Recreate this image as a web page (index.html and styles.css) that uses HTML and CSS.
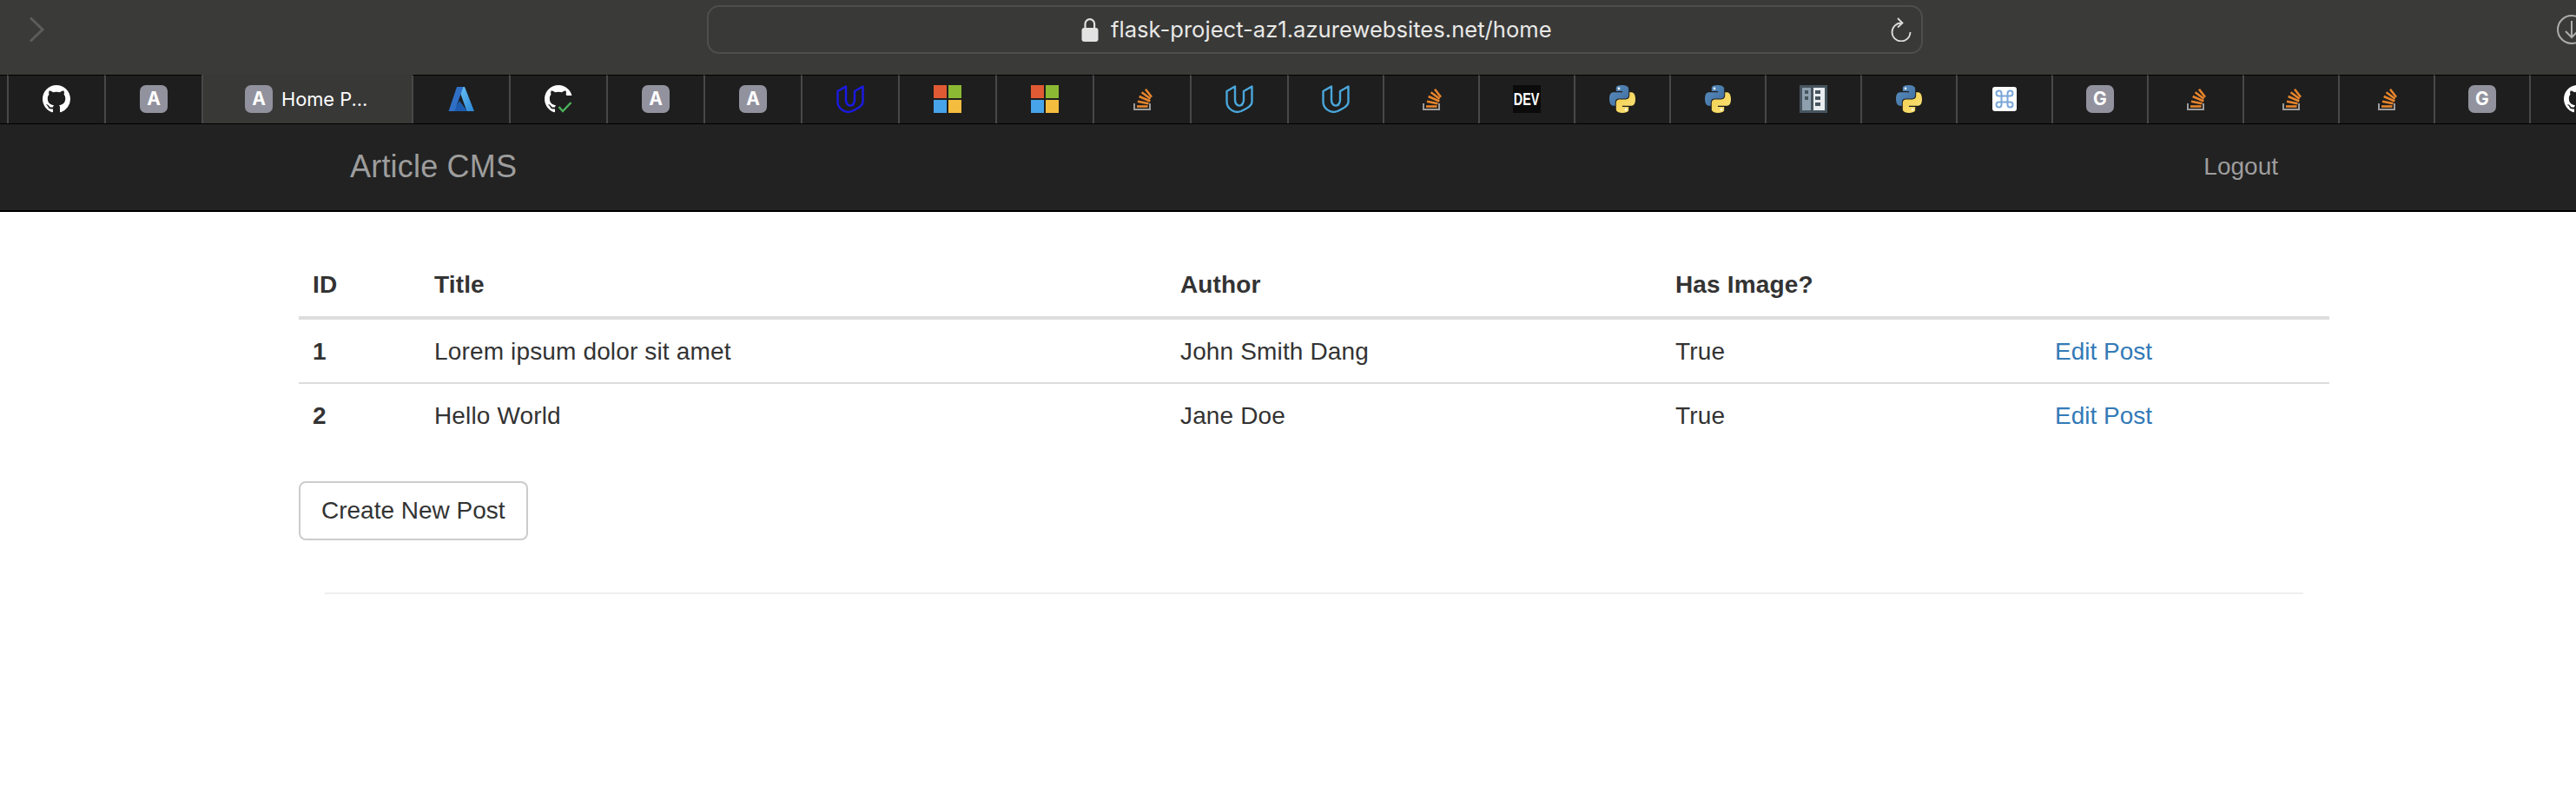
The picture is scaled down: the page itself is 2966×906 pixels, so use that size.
FILE: index.html
```html
<!DOCTYPE html>
<html lang="en">
<head>
<meta charset="utf-8">
<title>Home Page - Article CMS</title>
<link rel="stylesheet" href="styles.css">
</head>
<body>
<svg class="sprite" aria-hidden="true">
  <defs>
    <linearGradient id="pyblue" x1="0" y1="0" x2="1" y2="1"><stop offset="0" stop-color="#5a8fc0"/><stop offset="1" stop-color="#3f6c9e"/></linearGradient>
    <linearGradient id="pyyellow" x1="0" y1="0" x2="1" y2="1"><stop offset="0" stop-color="#fbe27a"/><stop offset="1" stop-color="#f2cf4c"/></linearGradient>
    <linearGradient id="azlight" x1="0" y1="0" x2="1" y2="1"><stop offset="0" stop-color="#6cc6f6"/><stop offset="1" stop-color="#2a86d6"/></linearGradient>
  </defs>
  <symbol id="gh" viewBox="0 0 16 16"><path fill="#fff" d="M8 0C3.58 0 0 3.58 0 8c0 3.54 2.29 6.53 5.47 7.59.4.07.55-.17.55-.38 0-.19-.01-.82-.01-1.49-2.01.37-2.53-.49-2.69-.94-.09-.23-.48-.94-.82-1.13-.28-.15-.68-.52-.01-.53.63-.01 1.08.58 1.23.82.72 1.21 1.87.87 2.33.66.07-.52.28-.87.51-1.07-1.78-.2-3.64-.89-3.64-3.95 0-.87.31-1.59.82-2.15-.08-.2-.36-1.02.08-2.12 0 0 .67-.21 2.2.82.64-.18 1.32-.27 2-.27.68 0 1.36.09 2 .27 1.53-1.04 2.2-.82 2.2-.82.44 1.1.16 1.92.08 2.12.51.56.82 1.27.82 2.15 0 3.07-1.87 3.75-3.65 3.95.29.25.54.73.54 1.48 0 1.07-.01 1.93-.01 2.2 0 .21.15.46.55.38A8.013 8.013 0 0016 8c0-4.42-3.58-8-8-8z"/></symbol>
  <symbol id="udacity" viewBox="0 0 32 32"><path fill="none" stroke="currentColor" stroke-width="2.400" stroke-linejoin="round" stroke-linecap="round" d="M1.500 19V7L11 1.500V17C11 22.500 15 25 19 22.800M21 17V7L30.500 1.500V19C30.500 23 28 25 23 27.500L18 30C10 33 1.500 27 1.500 19M21 17C21 20 19 22.500 17 23.500"/></symbol>
  <symbol id="ms" viewBox="0 0 32 32"><rect width="15" height="15" fill="#e05a33"/><rect x="17" width="15" height="15" fill="#8cb934"/><rect y="17" width="15" height="15" fill="#47a3ea"/><rect x="17" y="17" width="15" height="15" fill="#f5bd3f"/></symbol>
  <symbol id="so" viewBox="0 0 32 32"><path fill="none" stroke="#9b9b9b" stroke-width="2" d="M7 21V28H25V21"/><g stroke="#e8852c" stroke-width="2.600" fill="none"><path d="M10 24.500H22.500"/><path d="M11 18.700 23.500 21.200"/><path d="M12.700 13 25.300 18.500"/><path d="M15.600 8.300 25.600 15.700"/><path d="M20 4.700 27 13.700"/></g></symbol>
  <symbol id="py" viewBox="0 0 32 32"><path fill="url(#pyblue)" d="M15.900 0C8.300 0 8.800 3.400 8.800 3.400V7H16.100V8.200H5.900S1 7.600 1 15.700 5.300 23.700 5.300 23.700H7.800V19.900S7.700 15.600 12 15.600H19.200S23.200 15.700 23.200 11.600V4.400S23.800 0 15.900 0Z"/><circle cx="12" cy="3.900" r="1.300" fill="#fff"/><g transform="rotate(180 16 16)"><path fill="url(#pyyellow)" d="M15.900 0C8.300 0 8.800 3.400 8.800 3.400V7H16.100V8.200H5.900S1 7.600 1 15.700 5.300 23.700 5.300 23.700H7.800V19.900S7.700 15.600 12 15.600H19.200S23.200 15.700 23.200 11.600V4.400S23.800 0 15.900 0Z"/><circle cx="12" cy="3.900" r="1.300" fill="#fff"/></g></symbol>
</svg>

<header class="toolbar">
  <svg class="chevron" viewBox="0 0 18 30"><path d="M2 1.500 16 15 2 28.500" fill="none" stroke="#5c5c5b" stroke-width="3"/></svg>
  <div class="address">
    <svg class="lock" viewBox="0 0 20 28"><path d="M4.500 13V7.500a5.300 5.300 0 0 1 10.600 0V13" fill="none" stroke="#e2e2e2" stroke-width="2.200"/><rect x="0.500" y="12" width="19" height="16" rx="3" fill="#e2e2e2"/></svg>
    <span class="url">flask-project-az1.azurewebsites.net/home</span>
    <svg class="reload" viewBox="0 0 24 28"><path d="M12 6.500A10.500 10.500 0 1 0 22.500 17" fill="none" stroke="#dcdcdc" stroke-width="1.800"/><path d="M8 1 13.500 6.500 8 11.500" fill="none" stroke="#dcdcdc" stroke-width="1.800"/></svg>
  </div>
  <svg class="download" viewBox="0 0 36 36"><circle cx="18" cy="18" r="16" fill="none" stroke="#adadad" stroke-width="2"/><path d="M18 8V27M11 20 18 27 25 20" fill="none" stroke="#adadad" stroke-width="2"/></svg>
</header>

<nav class="tabs">
  <div class="tab tab-stub"></div>
  <div class="tab"><svg class="ico"><use href="#gh"/></svg></div>
  <div class="tab"><span class="letter">A</span></div>
  <div class="tab tab-active"><span class="letter">A</span><span class="tab-title">Home P...</span></div>
  <div class="tab">
    <svg class="ico" viewBox="0 0 32 32"><polygon points="12.500,2 20,2 31,30 22.500,30" fill="url(#azlight)"/><polygon points="14,18 23,30 7,30" fill="#1c5cb0"/><polygon points="11,2 18.500,2 8.500,30 1.500,30" fill="#2f6fc6"/></svg>
  </div>
  <div class="tab">
    <svg class="ico" viewBox="0 0 32 32"><use href="#gh" width="32" height="32"/><polygon points="24,12 33,12 33,33 13,33 13,20 24,20" fill="#1e1e1e"/><path d="M16.500 25 21 30 30.500 20" fill="none" stroke="#4cb05a" stroke-width="2.400"/></svg>
  </div>
  <div class="tab"><span class="letter">A</span></div>
  <div class="tab"><span class="letter">A</span></div>
  <div class="tab"><svg class="ico u-dark"><use href="#udacity"/></svg></div>
  <div class="tab"><svg class="ico"><use href="#ms"/></svg></div>
  <div class="tab"><svg class="ico"><use href="#ms"/></svg></div>
  <div class="tab"><svg class="ico"><use href="#so"/></svg></div>
  <div class="tab"><svg class="ico u-light"><use href="#udacity"/></svg></div>
  <div class="tab tab-narrow"><svg class="ico u-light"><use href="#udacity"/></svg></div>
  <div class="tab tab-narrow"><svg class="ico"><use href="#so"/></svg></div>
  <div class="tab tab-narrow"><span class="dev"><span class="dev-text">DEV</span></span></div>
  <div class="tab tab-narrow"><svg class="ico"><use href="#py"/></svg></div>
  <div class="tab tab-narrow"><svg class="ico"><use href="#py"/></svg></div>
  <div class="tab tab-narrow">
    <svg class="ico" viewBox="0 0 32 32"><rect width="32" height="32" fill="#47555f"/><rect x="3" y="3" width="10" height="26" fill="#8ea0ae"/><rect x="16" y="3" width="13" height="26" fill="#e9edf0"/><g fill="#47555f"><rect x="6" y="6" width="4" height="4"/><rect x="6" y="13" width="4" height="4"/><rect x="18" y="6" width="6" height="4"/><rect x="18" y="13" width="6" height="4"/><rect x="18" y="20" width="6" height="4"/></g></svg>
  </div>
  <div class="tab tab-narrow"><svg class="ico"><use href="#py"/></svg></div>
  <div class="tab tab-narrow">
    <svg class="ico-cmd" viewBox="0 0 28 28"><rect width="28" height="28" rx="3" fill="#fff"/><path d="M10.500 10.500H17.500V17.500H10.500ZM10.500 10.500V7.500A3 3 0 1 0 7.500 10.500H10.500ZM17.500 10.500H20.500A3 3 0 1 0 17.500 7.500ZM17.500 17.500V20.500A3 3 0 1 0 20.500 17.500ZM10.500 17.500H7.500A3 3 0 1 0 10.500 20.500Z" fill="none" stroke="#7ba7d9" stroke-width="2"/></svg>
  </div>
  <div class="tab tab-narrow"><span class="letter">G</span></div>
  <div class="tab tab-narrow"><svg class="ico"><use href="#so"/></svg></div>
  <div class="tab tab-narrow"><svg class="ico"><use href="#so"/></svg></div>
  <div class="tab tab-narrow"><svg class="ico"><use href="#so"/></svg></div>
  <div class="tab tab-narrow"><span class="letter">G</span></div>
  <div class="tab tab-narrow"><svg class="ico"><use href="#gh"/></svg></div>
</nav>

<div class="navbar">
  <div class="navbar-inner">
    <a class="brand" href="#">Article CMS</a>
    <a class="nav-link" href="#">Logout</a>
  </div>
</div>

<main class="page">
  <table class="posts">
    <colgroup>
      <col class="c-id"><col class="c-title"><col class="c-author"><col class="c-image"><col class="c-edit">
    </colgroup>
    <thead>
      <tr><th>ID</th><th>Title</th><th>Author</th><th>Has Image?</th><th></th></tr>
    </thead>
    <tbody>
      <tr><th>1</th><td>Lorem ipsum dolor sit amet</td><td>John Smith Dang</td><td>True</td><td><a class="link" href="#">Edit Post</a></td></tr>
      <tr><th>2</th><td>Hello World</td><td>Jane Doe</td><td>True</td><td><a class="link" href="#">Edit Post</a></td></tr>
    </tbody>
  </table>
  <a class="btn" href="#">Create New Post</a>
  <hr class="rule">
</main>
</body>
</html>
```

FILE: styles.css
```css
* { box-sizing: border-box; }

html, body {
  margin: 0;
  padding: 0;
  height: 100%;
  overflow: hidden;
  background: #fff;
}

body {
  font-family: "Liberation Sans", Arial, sans-serif;
  font-size: 28px;
  line-height: 40px;
  color: #333;
}

.sprite {
  position: absolute;
  width: 0;
  height: 0;
}

/* Browser toolbar */
.toolbar {
  display: flex;
  align-items: center;
  height: 86px;
  padding: 0 0 18px 33px;
  background: #3a3a38;
  overflow: hidden;
}

.chevron {
  width: 18px;
  height: 30px;
  flex: none;
}

.address {
  display: flex;
  align-items: center;
  flex: none;
  width: 1400px;
  height: 56px;
  margin-left: 763px;
  padding: 0 11px 0 429px;
  border: 2px solid #4e4e4c;
  border-radius: 14px;
  background: #393938;
}

.lock {
  width: 20px;
  height: 28px;
  flex: none;
}

.url {
  margin-left: 14px;
  font-family: Inter, "Liberation Sans", sans-serif;
  font-size: 25.6px;
  line-height: 32px;
  color: #e8e8e6;
  white-space: nowrap;
}

.reload {
  width: 24px;
  height: 28px;
  flex: none;
  margin-left: auto;
}

.download {
  width: 36px;
  height: 36px;
  flex: none;
  margin-left: 729px;
}

/* Tab strip */
.tabs {
  display: flex;
  height: 57px;
  background: #1e1e1e;
  border-bottom: 1px solid #000;
  overflow: hidden;
}

.tab {
  display: flex;
  align-items: center;
  justify-content: center;
  flex: none;
  width: 112px;
  height: 56px;
  padding-bottom: 1px;
  border-top: 1px solid #000;
  border-left: 2px solid #484848;
}

.tab-stub {
  width: 8px;
  border-left: 0;
}

.tab-narrow {
  width: 110px;
}

.tab-active {
  width: 242px;
  justify-content: flex-start;
  padding-left: 48px;
  background: #383837;
  border-top-color: #383837;
}

.tab-title {
  margin-left: 10px;
  font-family: Inter, "Liberation Sans", sans-serif;
  font-size: 21.8px;
  line-height: 32px;
  color: #fff;
  white-space: nowrap;
}

.ico {
  display: block;
  flex: none;
  width: 32px;
  height: 32px;
}

.ico-cmd {
  display: block;
  flex: none;
  width: 28px;
  height: 28px;
}

.u-dark { color: #1a1ae6; }
.u-light { color: #4aa7dc; }

.letter {
  display: flex;
  align-items: center;
  justify-content: center;
  flex: none;
  width: 32px;
  height: 32px;
  border-radius: 7px;
  background: #92929e;
  font-family: Inter, "Liberation Sans", sans-serif;
  font-size: 21px;
  font-weight: 700;
  line-height: 32px;
  color: #fff;
}

.dev {
  display: flex;
  align-items: center;
  justify-content: center;
  flex: none;
  width: 32px;
  height: 32px;
  background: #0b0b0b;
  overflow: hidden;
}

.dev-text {
  font-size: 20px;
  font-weight: 700;
  line-height: 32px;
  color: #fff;
  transform: scaleX(0.72);
}

/* Page navbar */
.navbar {
  height: 101px;
  background: #222;
  border-bottom: 2px solid #000;
}

.navbar-inner {
  display: flex;
  align-items: center;
  justify-content: space-between;
  width: 2338px;
  height: 98px;
  margin-left: 344px;
  padding: 0 59px;
}

.brand {
  font-size: 36px;
  letter-spacing: 0.2px;
  color: #9d9d9d;
  text-decoration: none;
}

.nav-link {
  color: #9d9d9d;
  text-decoration: none;
}

/* Content */
.page {
  width: 2338px;
  margin-left: 344px;
  padding-top: 48px;
}

.posts {
  width: 100%;
  margin-bottom: 40px;
  border-collapse: collapse;
  table-layout: fixed;
}

.c-id { width: 140px; }
.c-title { width: 859px; }
.c-author { width: 570px; }
.c-image { width: 437px; }
.c-edit { width: 332px; }

.posts th,
.posts td {
  padding: 16px;
  text-align: left;
  vertical-align: top;
  letter-spacing: 0.15px;
}

.posts tbody th,
.posts tbody td {
  padding: 17px 16px 15px;
}

.posts thead th {
  border-bottom: 4px solid #ddd;
}

.posts tbody tr + tr th,
.posts tbody tr + tr td {
  border-top: 2px solid #ddd;
}

.link {
  color: #337ab7;
  letter-spacing: 0;
  text-decoration: none;
}

.btn {
  display: inline-block;
  padding: 12px 24px;
  border: 2px solid #ccc;
  border-radius: 8px;
  background: #fff;
  color: #333;
  text-decoration: none;
  vertical-align: top;
}

.rule {
  height: 2px;
  margin: 60px 30px 0;
  border: 0;
  background: #eee;
}
```
